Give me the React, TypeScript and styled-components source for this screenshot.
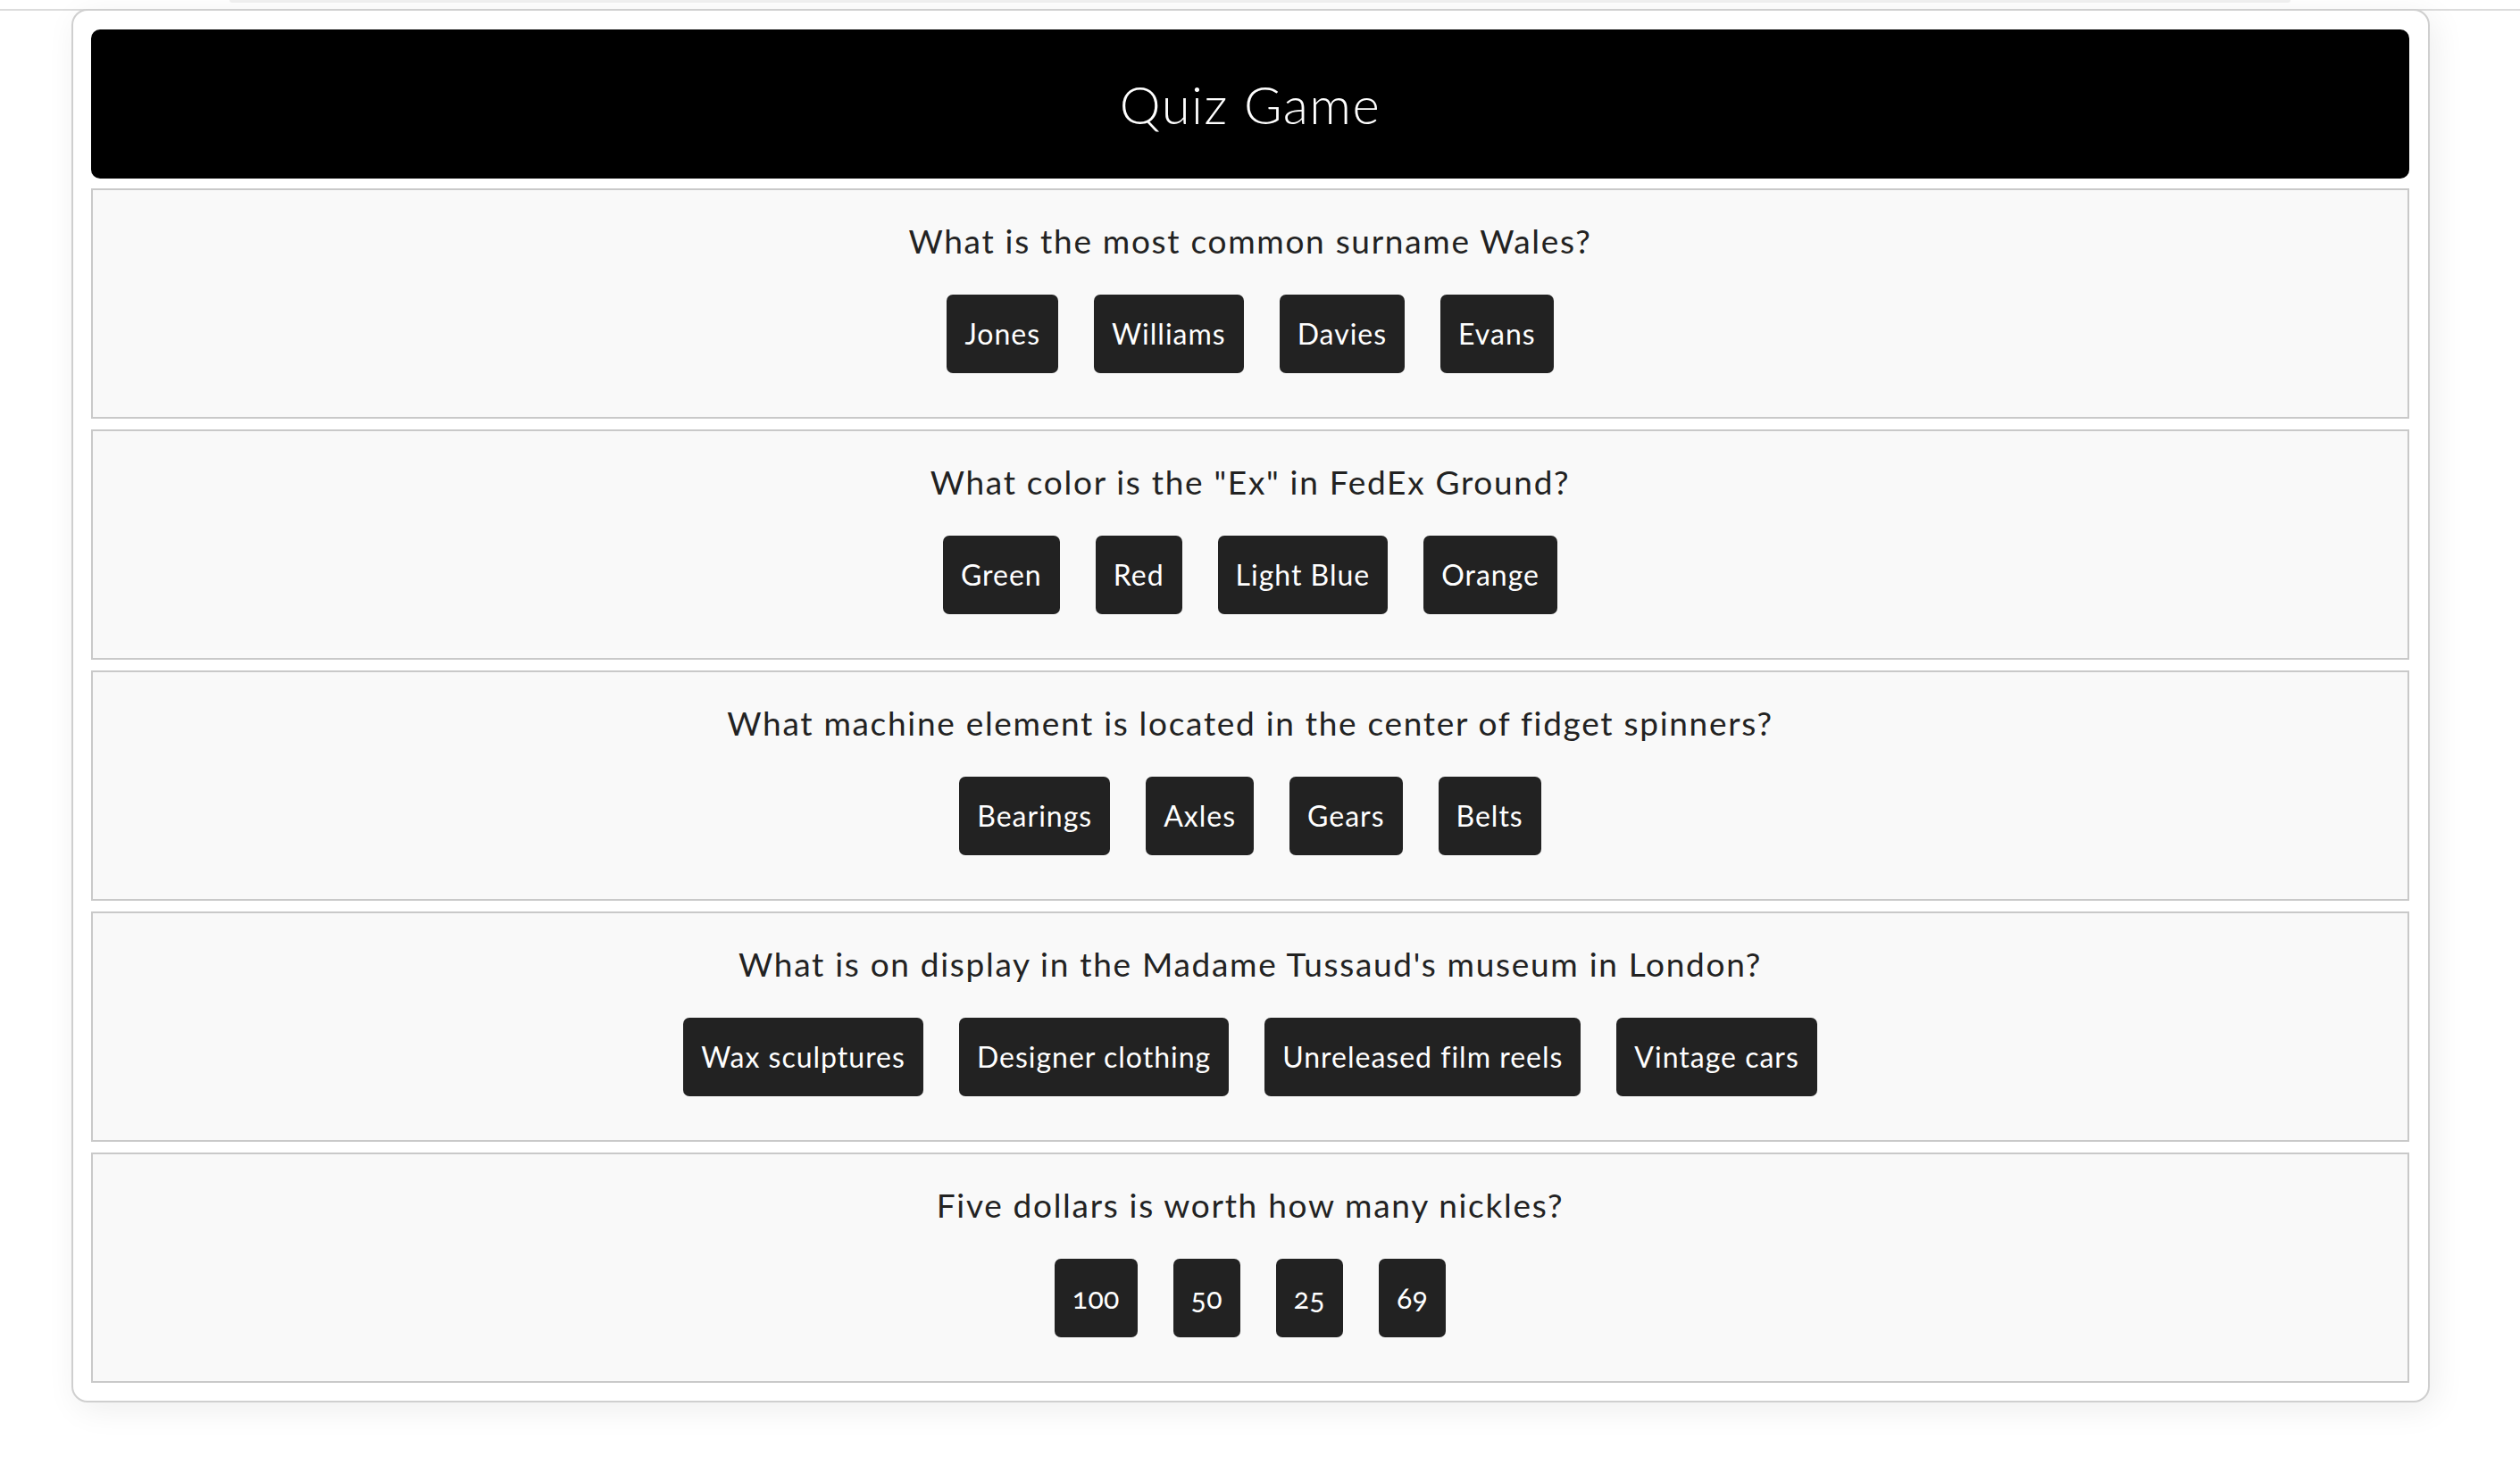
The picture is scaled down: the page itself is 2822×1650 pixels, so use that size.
import React from "react";
import styled, { createGlobalStyle } from "styled-components";

const GlobalStyle = createGlobalStyle`
  html, body {
    margin: 0;
    padding: 0;
    background: #ffffff;
  }
  body {
    font-family: "Lato", "Open Sans", "Liberation Sans", sans-serif;
    color: #222222;
  }
  * { box-sizing: border-box; }
`;

const Page = styled.div`
  width: 2822px;
  min-height: 1650px;
  background: #ffffff;
`;

const TopEdge = styled.div`
  padding-bottom: 7px;
  border-bottom: 2px solid #dcdcdc;
`;

const StrayTab = styled.div`
  width: 2308px;
  height: 3px;
  margin-left: 257px;
  background: #f1f1f1;
  border-radius: 0 0 4px 4px;
`;

const Frame = styled.main`
  width: 2641px;
  margin-left: 80px;
  margin-top: -2px;
  border: 2px solid #cfcfcf;
  border-radius: 18px;
  background: #ffffff;
  padding: 21px 21px 20px 20px;
  box-shadow: 6px 8px 36px rgba(0, 0, 0, 0.07);
  display: flex;
  flex-direction: column;
  gap: 12px;
`;

const Header = styled.header`
  height: 167px;
  margin-bottom: -1px;
  background: #000000;
  border-radius: 10px;
  display: flex;
  align-items: center;
  justify-content: center;
`;

const Title = styled.h1`
  margin: 0;
  color: #ffffff;
  font-size: 58px;
  font-weight: 300;
  letter-spacing: 1.5px;
`;

const Card = styled.section`
  height: 258px;
  background: #f9f9f9;
  border: 2px solid #c9c9c9;
  padding-top: 30px;
  display: flex;
  flex-direction: column;
  align-items: center;
`;

const Question = styled.h2`
  margin: 0;
  font-size: 37px;
  line-height: 54px;
  font-weight: 400;
  color: #222222;
  letter-spacing: 1.7px;
`;

const Answers = styled.div`
  margin-top: 33px;
  display: flex;
  justify-content: center;
  gap: 40px;
`;

const AnswerButton = styled.button<{ $numeric?: boolean }>`
  height: 88px;
  padding: 0 20px;
  border: none;
  border-radius: 7px;
  background: #222222;
  color: #ffffff;
  font-family: "Lato", "Open Sans", "Liberation Sans", sans-serif;
  font-size: 32px;
  line-height: 48px;
  letter-spacing: ${(p) => (p.$numeric ? "0.3px" : "1px")};
  cursor: pointer;
  font-variant-numeric: ${(p) => (p.$numeric ? "oldstyle-nums" : "normal")};
`;

type Item = { q: string; a: string[]; numeric?: boolean };

const quiz: Item[] = [
  { q: "What is the most common surname Wales?", a: ["Jones", "Williams", "Davies", "Evans"] },
  { q: 'What color is the "Ex" in FedEx Ground?', a: ["Green", "Red", "Light Blue", "Orange"] },
  {
    q: "What machine element is located in the center of fidget spinners?",
    a: ["Bearings", "Axles", "Gears", "Belts"],
  },
  {
    q: "What is on display in the Madame Tussaud's museum in London?",
    a: ["Wax sculptures", "Designer clothing", "Unreleased film reels", "Vintage cars"],
  },
  { q: "Five dollars is worth how many nickles?", a: ["100", "50", "25", "69"], numeric: true },
];

export default function App() {
  return (
    <Page>
      <GlobalStyle />
      <TopEdge>
        <StrayTab />
      </TopEdge>
      <Frame>
        <Header>
          <Title>Quiz Game</Title>
        </Header>
        {quiz.map((item) => (
          <Card key={item.q}>
            <Question>{item.q}</Question>
            <Answers>
              {item.a.map((ans) => (
                <AnswerButton key={ans} $numeric={item.numeric}>
                  {ans}
                </AnswerButton>
              ))}
            </Answers>
          </Card>
        ))}
      </Frame>
    </Page>
  );
}
